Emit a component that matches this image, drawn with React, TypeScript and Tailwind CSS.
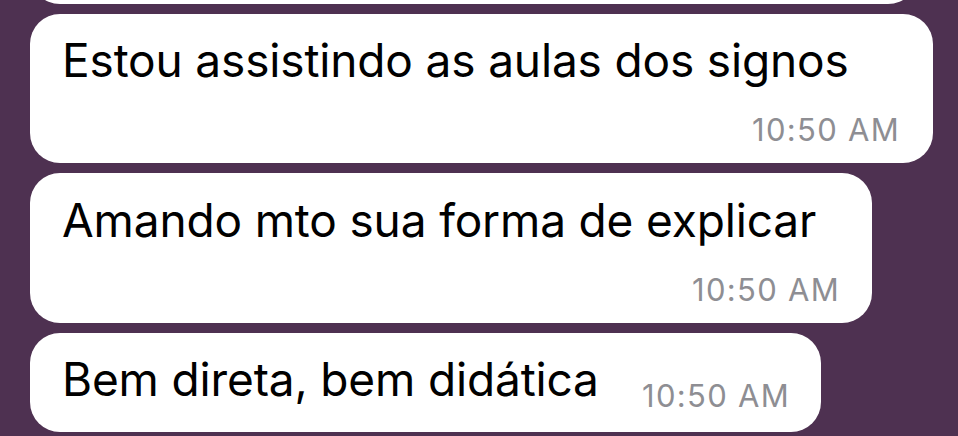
export default function App() {
  const font = { fontFamily: 'Inter, "Noto Sans", sans-serif' };
  return (
    <div
      className="w-[958px] h-[436px] overflow-hidden bg-[#4e3151] flex flex-col items-start gap-[10px] pl-[30px]"
      style={font}
    >
      <div className="mt-[-60px] h-[64px] w-[888px] shrink-0 rounded-[30px] bg-white" />
      <div className="h-[149px] w-[903px] shrink-0 rounded-[30px] bg-white pl-[32px] pr-[33px] pt-[23px] flex flex-col">
        <div className="whitespace-nowrap text-[46px] leading-none text-black tracking-[-0.15px]">Estou assistindo as aulas dos signos</div>
        <div className="mt-[31px] self-end whitespace-nowrap text-[31px] leading-none text-[#8e8e93] tracking-[1.3px]">10:50 AM</div>
      </div>
      <div className="h-[150px] w-[842px] shrink-0 rounded-[30px] bg-white pl-[32px] pr-[32px] pt-[24px] flex flex-col">
        <div className="whitespace-nowrap text-[46px] leading-none text-black tracking-[-0.15px]">Amando mto sua forma de explicar</div>
        <div className="mt-[31px] self-end whitespace-nowrap text-[31px] leading-none text-[#8e8e93] tracking-[1.3px]">10:50 AM</div>
      </div>
      <div className="h-[99px] w-[791px] shrink-0 rounded-[30px] bg-white pl-[32px] pr-[31px] pt-[23px] flex items-start justify-between">
        <div className="whitespace-nowrap text-[46px] leading-none text-black tracking-[-0.15px]">Bem direta, bem didática</div>
        <div className="mt-[24px] whitespace-nowrap text-[31px] leading-none text-[#8e8e93] tracking-[1.3px]">10:50 AM</div>
      </div>
    </div>
  );
}
